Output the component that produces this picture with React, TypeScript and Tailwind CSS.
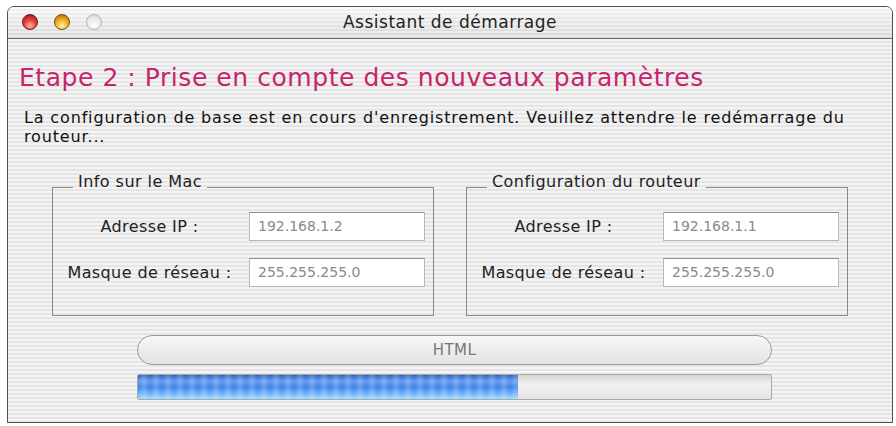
import React from "react";

const stripes =
  "bg-[repeating-linear-gradient(to_bottom,#f4f4f4_0px,#f4f4f4_2px,#e5e5e5_2px,#e5e5e5_4px)]";

function Light({ color }: { color: "red" | "orange" | "gray" }) {
  const cls =
    color === "red"
      ? "border-[#6e1616] bg-[radial-gradient(circle_at_50%_78%,#ffb4a4_0%,#e8443a_45%,#9c0e0c_100%)]"
      : color === "orange"
        ? "border-[#6e5010] bg-[radial-gradient(circle_at_50%_78%,#fff4a8_0%,#f5b323_45%,#a86205_100%)]"
        : "border-[#b4b4b4] bg-[radial-gradient(circle_at_50%_78%,#ffffff_0%,#ededed_50%,#d2d2d2_100%)]";
  return <div className={`h-[16px] w-[16px] rounded-full border ${cls}`} />;
}

function Field({ label, value }: { label: string; value: string }) {
  return (
    <div className="flex items-center">
      <div className="w-[165px] text-center text-[16px] tracking-[0.4px] text-[#222]">{label}</div>
      <div className="ml-[17px] flex h-[29px] w-[176px] items-center border border-[#b8b8b8] border-t-[#8e8e8e] bg-white pl-[8px] text-[14px] text-[#8a8a8a]">
        {value}
      </div>
    </div>
  );
}

function Group({ title, children }: { title: string; children: React.ReactNode }) {
  return (
    <fieldset className="w-[382px] border border-[#8a8a8a] pb-[28px] pl-[14px] pr-[8px] pt-[8px]">
      <legend className="ml-[6px] px-[5px] pb-[10px] text-[16px] leading-[24px] tracking-[0.45px] text-[#222]">
        {title}
      </legend>
      <div className="flex flex-col gap-[17px]">{children}</div>
    </fieldset>
  );
}

export default function App() {
  return (
    <div className="h-[426px] w-[896px] bg-white pl-[7px] pt-[6px]">
      <div
        className={`flex h-[417px] w-[886px] flex-col overflow-hidden rounded-t-[7px] border border-[#505050] font-['DejaVu_Sans',sans-serif] ${stripes}`}
      >
        {/* title bar */}
        <div className="relative flex h-[32px] shrink-0 items-center justify-center border-b border-[#6a6a6a] bg-[repeating-linear-gradient(to_bottom,rgba(255,255,255,0.35)_0px,rgba(255,255,255,0.35)_2px,rgba(0,0,0,0.02)_2px,rgba(0,0,0,0.02)_4px),linear-gradient(to_bottom,#f8f8f8,#dcdcdc)]">
          <div className="absolute left-[14px] top-[7px] flex gap-[16px]">
            <Light color="red" />
            <Light color="orange" />
            <Light color="gray" />
          </div>
          <span className="text-[17px] tracking-[0.5px] text-[#222]">Assistant de démarrage</span>
        </div>

        <div className="flex flex-1 flex-col px-[11px] pt-[24px]">
          <h1 className="text-[25px] leading-[30px] tracking-[0.55px] text-[#c8246b]">
            Etape 2 : Prise en compte des nouveaux paramètres
          </h1>
          <p className="mt-[15px] pl-[5px] text-[16px] leading-[19px] tracking-[0.85px] text-[#111]">
            La configuration de base est en cours d'enregistrement. Veuillez attendre le redémarrage du
            routeur...
          </p>

          <div className="mt-[24px] flex gap-[32px] pl-[33px]">
            <Group title="Info sur le Mac">
              <Field label="Adresse IP :" value="192.168.1.2" />
              <Field label="Masque de réseau :" value="255.255.255.0" />
            </Group>
            <Group title="Configuration du routeur">
              <Field label="Adresse IP :" value="192.168.1.1" />
              <Field label="Masque de réseau :" value="255.255.255.0" />
            </Group>
          </div>

          <div className="ml-[118px] mt-[19px] flex w-[635px] flex-col gap-[9px]">
            <div className="flex h-[30px] items-center justify-center rounded-full border border-[#9a9a9a] bg-[linear-gradient(to_bottom,#f8f8f8,#e2e2e2)] text-[15px] tracking-[0.5px] text-[#777]">
              HTML
            </div>
            <div className="flex h-[26px] overflow-hidden rounded-[2px] border border-[#a8a8a8] bg-[linear-gradient(to_bottom,#d6d6d6,#f2f2f2_40%,#e4e4e4)]">
              <div className="h-full w-[380px] bg-[linear-gradient(to_bottom,#2a5cc2_0%,#5f9cf0_25%,#3b7ee6_50%,#6fb6ff_80%,#a2d8ff_100%)]">
                <div className="h-full w-full bg-[repeating-linear-gradient(to_right,rgba(255,255,255,0)_0px,rgba(255,255,255,0.22)_6px,rgba(255,255,255,0)_12px)]" />
              </div>
            </div>
          </div>
        </div>
      </div>
    </div>
  );
}
